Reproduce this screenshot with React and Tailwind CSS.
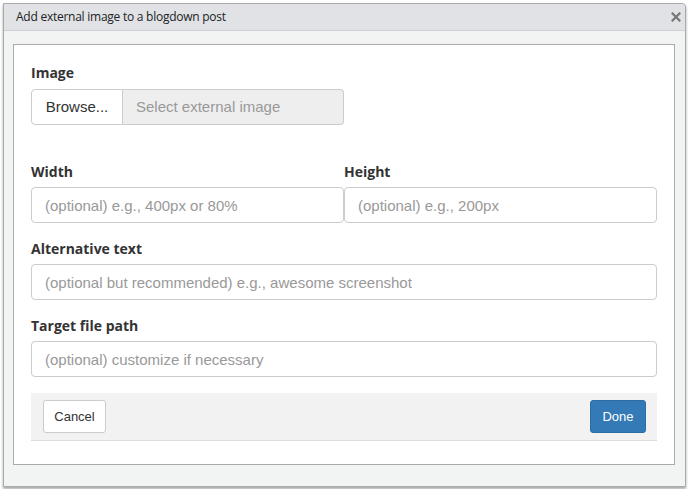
import React from "react";

const LABEL = "block font-['Open_Sans',sans-serif] text-[14px] font-bold leading-[20px] text-[#333]";
const INPUT =
  "block h-[36px] w-full rounded-[4px] border border-[#ccc] bg-white px-[13px] text-[15px] text-[#333] placeholder:text-[#999] outline-none";

const Field = ({ label, placeholder, className = "" }) => (
  <div className={className}>
    <label className={`${LABEL} mb-[5px]`}>{label}</label>
    <input className={INPUT} placeholder={placeholder} />
  </div>
);

const CloseIcon = () => (
  <svg width="10" height="10" viewBox="0 0 10 10" className="text-[#777]">
    <path d="M1.5 1.5 L8.5 8.5 M8.5 1.5 L1.5 8.5" stroke="currentColor" strokeWidth="2.2" strokeLinecap="square" />
  </svg>
);

export default function App() {
  return (
    <div className="min-h-[489px] w-[688px] bg-white pt-[3px] pl-[3px] font-['Liberation_Sans',Arial,sans-serif]">
      <div className="w-[683px] rounded-tr-[4px] border border-[#a9a9a9] bg-[#f2f3f3] shadow-[0_2px_3px_rgba(0,0,0,0.35)]">
        <div className="flex h-[27px] items-center justify-between rounded-tr-[4px] border-b border-[#cfd0d3] bg-[#e1e2e6] pl-[12px] pr-[4px]">
          <span className="font-['Open_Sans',sans-serif] text-[12px] tracking-[-0.25px] text-[#222]">
            Add external image to a blogdown post
          </span>
          <CloseIcon />
        </div>

        <div className="pt-[13px] pb-[21px] pl-[9px]">
          <div className="w-[662px] border border-[#aaa] bg-white px-[17px] pt-[18px] pb-[23px]">
            <label className={`${LABEL} mb-[6px]`}>Image</label>
            <div className="flex h-[36px] w-[313px] text-[15px]">
              <button className="w-[92px] rounded-l-[4px] border border-[#ccc] bg-white text-[#333]">Browse...</button>
              <div className="flex flex-1 items-center rounded-r-[4px] border border-l-0 border-[#ccc] bg-[#eee] px-[13px] text-[#999]">
                Select external image
              </div>
            </div>

            <div className="mt-[37px] grid grid-cols-2">
              <Field label="Width" placeholder="(optional) e.g., 400px or 80%" />
              <Field label="Height" placeholder="(optional) e.g., 200px" />
            </div>

            <Field className="mt-[16px]" label="Alternative text" placeholder="(optional but recommended) e.g., awesome screenshot" />
            <Field className="mt-[16px]" label="Target file path" placeholder="(optional) customize if necessary" />

            <div className="mt-[16px] flex h-[48px] items-start justify-between border-b border-[#ddd] bg-[#f2f2f2] pt-[7px] pl-[12px] pr-[11px] text-[13px]">
              <button className="h-[33px] w-[63px] rounded-[3px] border border-[#ccc] bg-white text-[#333]">Cancel</button>
              <button className="h-[33px] w-[56px] rounded-[3px] border border-[#2e6da4] bg-[#337ab7] text-white">Done</button>
            </div>
          </div>
        </div>
      </div>
    </div>
  );
}
